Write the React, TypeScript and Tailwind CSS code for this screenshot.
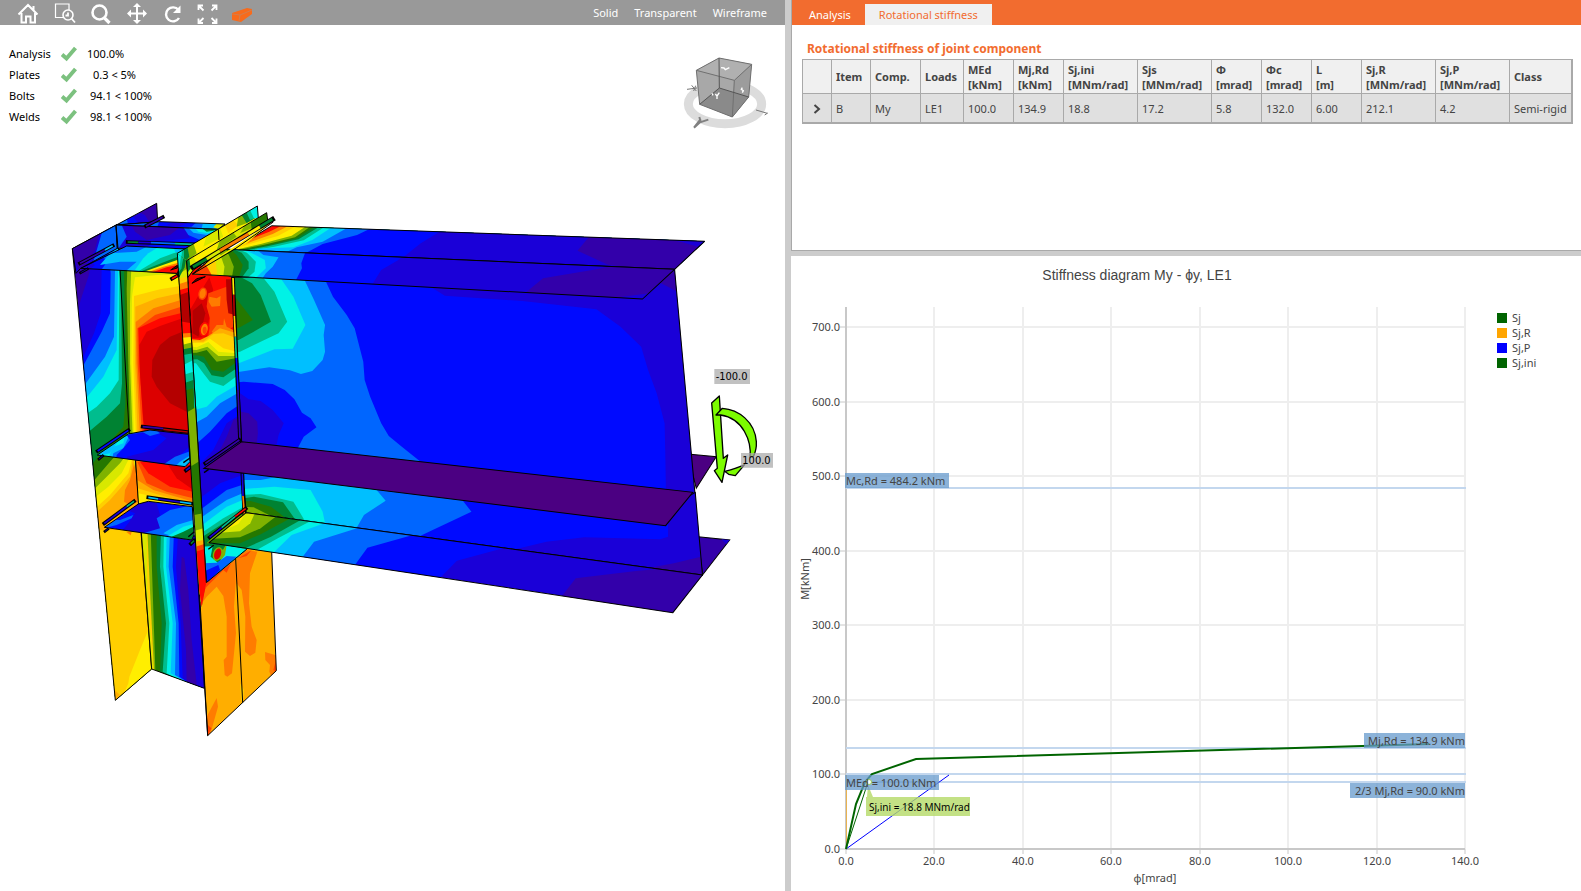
import React from "react";

type Band = [string, string];

interface FaceProps {
  id: string;
  outline: string;
  base: string;
  bands: Band[];
  stroke?: boolean;
}

// stress colours, low to high
const C = {
  purple: "#4b0082",
  indigo: "#3300aa",
  navy: "#1a00d8",
  blue: "#000aff",
  azure: "#0066ff",
  sky: "#00bfff",
  cyan: "#00f2e6",
  teal: "#00bd8e",
  green: "#008232",
  moss: "#257800",
  olive: "#7fb200",
  lime: "#d8e800",
  yellow: "#ffee00",
  gold: "#ffcf00",
  amber: "#ffae00",
  orange: "#ff7c00",
  coral: "#ff4200",
  red: "#ff0800",
  crimson: "#dc0000",
  maroon: "#b40000",
};

function Face({ id, outline, base, bands, stroke = true }: FaceProps) {
  return (
    <g>
      <clipPath id={id}>
        <polygon points={outline} />
      </clipPath>
      <g clipPath={`url(#${id})`}>
        <polygon points={outline} fill={base} />
        {bands.map(([color, points], i) => (
          <polygon key={i} points={points} fill={color} />
        ))}
      </g>
      {stroke && <polygon points={outline} fill="none" stroke="#000" strokeWidth={3} strokeLinejoin="round" />}
    </g>
  );
}

// weld drawn as a thin coloured bar, parts = [colour, x1, y1, x2, y2]
function Weld({ parts, width = 5 }: { parts: [string, number, number, number, number][]; width?: number }) {
  const first = parts[0];
  const last = parts[parts.length - 1];
  return (
    <g>
      <line x1={first[1]} y1={first[2]} x2={last[3]} y2={last[4]} stroke="#000" strokeWidth={width + 6} strokeLinecap="square" />
      {parts.map(([color, x1, y1, x2, y2], i) => (
        <line key={i} x1={x1} y1={y1} x2={x2} y2={y2} stroke={color} strokeWidth={width} />
      ))}
    </g>
  );
}

const leftFlange: Band[] = [
  [C.navy, "118,110 105,180 85,260 62,330 48,390 48,1600 300,1600 300,100"],
  [C.blue, "128,100 122,370 102,430 66,510 66,1600 300,1600 300,100"],
  [C.azure, "138,100 152,250 150,370 125,425 60,545 60,1600 300,1600 300,100"],
  [C.sky, "155,100 165,240 162,440 135,500 70,590 60,1600 300,1600 300,100"],
  [C.cyan, "170,100 174,250 170,480 130,560 74,630 60,1600 300,1600 300,100"],
  [C.teal, "178,240 176,570 150,610 110,650 75,675 60,1600 300,1600 300,100"],
  [C.green, "183,240 186,580 180,640 140,680 75,735 60,1600 300,1600 300,100"],
  [C.moss, "188,240 196,640 190,710 150,755 90,830 60,1600 300,1600 300,100"],
  [C.olive, "195,400 202,640 205,720 190,770 150,815 95,880 60,1600 300,1600 300,300"],
  [C.lime, "200,480 208,720 210,780 180,820 140,860 95,905 60,1600 300,1600"],
  [C.yellow, "212,740 215,790 185,850 145,890 95,930 60,1600 300,1600"],
  [C.gold, "218,800 205,850 150,915 95,965 60,1600 300,1600"],
  [C.amber, "220,800 210,860 185,890 150,930 95,980 110,1050 215,1036 240,1000"],
  [C.orange, "222,822 210,870 195,900 192,935 210,945 235,935 230,850"],
  [C.gold, "110,1020 245,1020 290,1500 166,1560"],
  [C.orange, "198,1025 215,1025 212,1036"],
  [C.yellow, "265,1320 240,1380 208,1460 205,1480 188,1520 290,1450"],
  [C.amber, "164,1500 180,1515 160,1540"],
];

const columnWebTop: Band[] = [
  [C.moss, "192,230 195,400 206,740 400,740 400,230"],
  [C.olive, "202,230 200,300 205,520 211,740 400,740 400,230"],
  [C.lime, "214,230 210,340 210,520 218,740 400,740 400,230"],
  [C.yellow, "225,262 290,255 380,252 400,740 222,740 214,520 216,320"],
  [C.gold, "222,318 300,298 380,285 400,740 228,740 220,520"],
  [C.amber, "226,350 290,325 380,305 400,740 233,740 225,520"],
  [C.orange, "227,396 280,355 380,325 400,740 240,740 229,520"],
  [C.coral, "232,415 285,375 380,345 400,740 246,740 233,520"],
  [C.red, "236,440 235,415 300,385 380,365 400,740 252,740 238,520"],
  [C.crimson, "238,465 260,425 300,408 380,380 400,740 260,740 250,690 240,550"],
  [C.maroon, "380,420 330,440 300,465 277,510 275,560 290,590 330,640 380,665"],
];

const columnWebMiddle: Band[] = [
  [C.coral, "232,815 260,880 320,905 400,925 400,800"],
  [C.red, "240,815 265,850 330,890 400,905 400,800"],
  [C.crimson, "318,815 370,820 400,830 400,900 350,865"],
  [C.amber, "232,870 280,900 400,935 400,960 230,960"],
  [C.gold, "233,895 300,915 400,945 400,960 230,960"],
  [C.yellow, "235,910 300,924 400,952 400,970 230,960"],
];

const columnWebBottom: Band[] = [
  [C.lime, "245,1000 260,1000 262,1200 280,1440 240,1440"],
  [C.olive, "262,1020 270,1200 282,1440 450,1520 450,1000 265,1000"],
  [C.moss, "272,1020 278,1200 286,1440 450,1520 450,1000 270,1000"],
  [C.green, "290,1020 290,1130 305,1300 300,1445 450,1520 450,1000"],
  [C.teal, "303,1020 300,1130 318,1300 308,1445 450,1520 450,1000"],
  [C.cyan, "312,1020 310,1130 328,1300 320,1450 450,1520 450,1000"],
  [C.sky, "320,1020 318,1130 338,1300 332,1450 450,1520 450,1000"],
  [C.azure, "330,1020 326,1130 348,1300 345,1455 450,1520 450,1000"],
  [C.blue, "342,1020 338,1130 356,1300 358,1460 450,1520 450,1000"],
  [C.navy, "355,1020 348,1130 362,1300 368,1465 450,1520 450,1000"],
  [C.indigo, "365,1100 373,1105 385,1200 395,1350 412,1500 380,1480 378,1380 360,1200"],
];

const flangeStrip: Band[] = [
  [C.lime, "340,262 395,228 395,2000 340,2000"],
  [C.green, "340,180 378,210 374,232 358,262 340,265"],
  [C.teal, "340,180 370,204 364,236 350,255"],
  [C.cyan, "340,180 363,199 358,234 350,245"],
  [C.gold, "340,272 395,255 395,2000 340,2000"],
  [C.orange, "340,288 395,270 395,2000 340,2000"],
  [C.red, "340,305 395,290 395,2000 340,2000"],
  [C.maroon, "340,322 395,302 395,400 340,390"],
  [C.orange, "340,432 400,428 450,2000 340,2000"],
  [C.yellow, "340,446 400,440 450,2000 340,2000"],
  [C.olive, "340,472 400,456 450,2000 340,2000"],
  [C.green, "340,484 400,472 450,2000 340,2000"],
  [C.teal, "340,500 400,490 450,2000 340,2000"],
  [C.cyan, "340,540 400,510 450,2000 340,2000"],
  [C.teal, "340,565 400,545 450,2000 340,2000"],
  [C.green, "340,590 400,570 450,2000 340,2000"],
  [C.moss, "340,610 400,595 450,2000 340,2000"],
  [C.olive, "340,690 410,650 450,2000 340,2000"],
  [C.moss, "340,862 420,812 450,2000 340,2000"],
  [C.olive, "340,985 430,970 450,2000 340,2000"],
  [C.lime, "340,1040 430,1015 450,2000 340,2000"],
  [C.amber, "340,1070 440,1048 450,2000 340,2000"],
  [C.coral, "340,1090 440,1060 450,2000 340,2000"],
  [C.red, "340,1105 440,1075 470,2000 340,2000"],
];

const rightFlange: Band[] = [
  [C.red, "400,1020 440,1060 444,1160 420,1210 400,1250"],
  [C.coral, "440,1165 418,1205 415,1240 440,1205 460,1175 500,1140 490,1120"],
  [C.orange, "415,1255 440,1220 470,1190 490,1218 500,1280 500,1400 491,1410 494,1455 502,1460 516,1450 528,1330 522,1250 527,1180 527,1105 500,1130 440,1190 416,1230"],
  [C.orange, "530,1100 560,1080 592,1085 570,1150 567,1240 575,1310 590,1350 586,1388 570,1398 555,1385 556,1280 545,1200 530,1180"],
  [C.coral, "535,1105 575,1080 560,1098"],
  [C.coral, "490,1140 513,1120 500,1148"],
  [C.orange, "440,1580 470,1524 474,1550 452,1628 440,1640"],
  [C.coral, "438,1600 454,1615 443,1640"],
  [C.orange, "615,1386 648,1396 652,1440 635,1460 628,1445 630,1425 616,1410"],
  [C.coral, "648,1410 640,1440 652,1450"],
  [C.gold, "540,1480 552,1500 549,1540 543,1530"],
];

const endPlate: Band[] = [
  [C.crimson, "425,300 448,262 460,300 440,345 448,380 440,440 405,445 380,440 390,360"],
  [C.maroon, "398,362 425,340 436,370 430,395 415,440 398,430"],
  [C.coral, "445,310 500,290 515,350 520,410 470,440 445,440 450,385 440,350"],
  [C.orange, "448,320 470,325 482,318 480,348 455,350 446,335"],
  [C.orange, "455,425 470,405 490,405 492,385 500,410 520,420 520,470 470,440"],
  [C.maroon, "498,268 522,268 526,375 505,370 500,330"],
  [C.amber, "360,445 420,450 445,438 480,415 530,430 530,760 360,760"],
  [C.gold, "360,452 430,455 460,432 490,430 530,445 530,760 360,760"],
  [C.yellow, "360,460 430,458 450,446 490,475 530,485 530,760 360,760"],
  [C.lime, "360,466 410,472 445,456 475,485 530,490 530,760 360,760"],
  [C.olive, "360,478 410,480 442,470 475,498 530,498 530,760 360,760"],
  [C.moss, "360,490 410,488 440,480 470,515 530,504 530,760 360,760"],
  [C.green, "360,498 410,496 432,500 455,540 490,545 530,515 530,760 360,760"],
  [C.teal, "360,510 412,508 432,520 455,556 490,562 530,535 530,760 360,760"],
  [C.cyan, "360,520 408,520 430,550 450,575 490,588 535,555 545,760 360,760"],
  [C.sky, "395,662 440,650 470,620 540,580 550,1100 400,1100"],
  [C.azure, "395,705 440,680 480,640 540,605 550,1100 400,1100"],
  [C.blue, "395,775 450,725 500,670 545,640 550,1100 400,1100"],
  [C.navy, "395,850 460,780 500,700 545,670 555,1100 400,1100"],
  [C.indigo, "460,820 500,740 520,690 545,680 555,760"],
  [C.blue, "420,925 480,880 560,850 560,1200 420,1200"],
  [C.azure, "420,960 500,900 560,880 560,1200 420,1200"],
  [C.sky, "420,985 500,930 560,905 560,1200 420,1200"],
  [C.cyan, "420,1010 500,950 560,925 560,1200 420,1200"],
  [C.teal, "420,1032 490,985 560,945 560,1200 420,1200"],
  [C.green, "420,1045 490,1000 560,955 560,1200 420,1200"],
  [C.olive, "440,1060 500,1000 560,965 560,1200"],
  [C.green, "425,1060 500,1060 490,1078 470,1085 465,1108 440,1120"],
  [C.cyan, "425,1070 458,1068 452,1100 475,1120 495,1095 500,1065 570,1080 430,1190"],
  [C.azure, "430,1120 470,1118 500,1098 530,1100 430,1190"],
  [C.blue, "430,1145 475,1125 480,1140 430,1190"],
];

const stiffenerUpper: Band[] = [
  [C.cyan, "100,820 195,735 190,760 160,770 140,815"],
  [C.azure, "215,720 190,775 160,790 150,840 110,850 400,840 400,700"],
  [C.sky, "140,770 180,745 150,790 100,800"],
  [C.blue, "200,735 210,750 190,775 170,795 165,830 400,870 400,700"],
  [C.navy, "215,735 290,728 320,745 280,780 200,800 205,825 320,830 400,760 400,745 330,720"],
  [C.azure, "240,722 290,722 300,730 270,738"],
  [C.azure, "300,830 345,800 400,780 400,860"],
  [C.sky, "345,830 360,815 400,790 400,860"],
];

const stiffenerLower: Band[] = [
  [C.navy, "150,1000 200,960 225,970 205,1000 180,1030 280,1040 310,1010 290,940 240,930 150,980"],
  [C.azure, "180,990 220,975 215,985 170,1005 130,1015 140,990"],
  [C.azure, "290,985 330,960 400,945 400,1060 250,1030 300,1015"],
  [C.sky, "310,1030 350,1005 400,990 400,1060"],
  [C.cyan, "320,1040 370,1010 400,1002 400,1060"],
  [C.green, "335,1040 370,1025 400,1010 400,1060"],
];

const beamTop: Band[] = [
  [C.orange, "135,70 85,95 20,122 -50,150 1500,150 1500,70"],
  [C.gold, "155,70 95,102 15,132 -50,150 1500,300 1500,70"],
  [C.yellow, "178,70 110,108 10,137 -50,155 1500,300 1500,70"],
  [C.olive, "205,70 150,107 60,132 -50,158 1500,300 1500,70"],
  [C.moss, "218,70 160,112 70,134 -50,160 1500,300 1500,70"],
  [C.green, "232,70 165,115 75,137 -50,162 1500,300 1500,70"],
  [C.teal, "247,70 170,118 80,139 -50,164 1500,300 1500,70"],
  [C.cyan, "262,70 185,121 100,140 -50,166 1500,300 1500,70"],
  [C.sky, "284,70 210,120 155,142 50,146 60,160 1500,300 1500,70"],
  [C.azure, "335,70 240,125 165,142 130,158 1500,300 1500,70"],
  [C.blue, "410,70 340,105 240,132 190,160 1500,300 1500,70"],
  [C.navy, "620,70 525,130 470,175 1500,300 1500,70"],
  [C.indigo, "1030,90 980,152 1070,195 1262,215 1400,120 1340,143 1280,125"],
];

const beamFront: Band[] = [
  [C.indigo, "1090,195 1040,207 880,235 815,290 1080,300 1110,290 1190,280 1300,200"],
  [C.blue, "480,160 460,180 410,210 380,260 -150,260 -150,130"],
  [C.azure, "192,150 178,190 180,205 160,245 -150,260 -150,130"],
  [C.sky, "50,150 68,165 112,172 95,200 75,220 62,240 -150,240 -150,130"],
  [C.cyan, "15,150 45,165 72,180 75,205 40,240 -150,240 -150,130"],
  [C.teal, "0,150 20,158 46,185 42,215 15,240 -150,240 -150,130"],
  [C.green, "-15,150 5,158 25,185 25,205 0,240 -150,240 -150,130"],
  [C.moss, "-30,145 -10,165 8,195 -5,240 -150,240 -150,130"],
  [C.olive, "-45,140 -30,170 -18,200 -25,240 -150,240 -150,130"],
  [C.lime, "-70,130 -55,170 -45,200 -50,240 -150,240 -150,130"],
  [C.gold, "-85,150 -70,190 -65,240 -150,240"],
  [C.coral, "-105,185 -90,210 -75,240 -150,240"],
];

const beamWeb: Band[] = [
  [C.navy, "540,240 560,265 595,287 820,303 1035,328 1105,380 1165,440 1185,510 1210,580 1233,670 1235,760 1237,880 1400,880 1400,200"],
  [C.indigo, "1215,245 1270,275 1262,200"],
  [C.azure, "245,235 270,290 310,345 333,385 358,485 362,540 378,590 410,670 432,708 470,740 530,790 -50,790 -50,220"],
  [C.sky, "185,235 215,300 247,375 243,405 247,455 240,480 210,513 177,522 145,511 85,502 0,515 -50,520 -50,220"],
  [C.cyan, "115,230 155,290 190,375 153,446 100,448 0,488 -50,495 -50,220"],
  [C.teal, "65,230 100,275 137,365 112,400 60,425 0,455 -50,470 -50,220"],
  [C.green, "0,230 35,250 60,285 90,365 40,395 0,418 -50,435 -50,220"],
  [C.moss, "-19,285 0,310 37,360 0,382 -50,400"],
  [C.blue, "-20,548 10,545 95,552 130,570 158,598 180,638 205,655 222,682 185,710 165,750 -20,740"],
  [C.navy, "-20,565 25,598 60,603 95,630 127,670 112,705 105,740 -20,740"],
  [C.indigo, "-20,630 25,640 50,665 52,700 48,735 -20,735"],
];

const beamWebLower: Band[] = [
  [C.navy, "1243,960 1243,1010 1220,1018 1000,1012 890,1025 770,1055 1400,1200 1400,860 1243,880"],
  [C.indigo, "1400,1055 1260,1090 1140,1113 1400,1150"],
  [C.azure, "630,880 672,935 515,1012 0,1000 0,780"],
  [C.sky, "380,850 423,902 360,945 335,990 0,1000 0,840 60,840 110,830"],
  [C.cyan, "0,868 100,860 205,870 240,935 248,975 0,960"],
  [C.teal, "0,885 60,882 155,905 190,965 0,960"],
  [C.green, "0,897 40,890 125,907 165,965 0,960"],
  [C.moss, "0,905 30,903 90,920 140,960 0,960"],
  [C.olive, "0,920 40,922 100,953 0,960"],
];

const beamBottom: Band[] = [
  [C.indigo, "1400,1090 1150,1113 975,1135 930,1195 1260,1250 1400,1200"],
  [C.blue, "780,1040 630,1082 575,1140 -150,1140 -150,900"],
  [C.azure, "520,1000 370,1043 330,1100 -150,1100 -150,900"],
  [C.sky, "350,975 340,985 215,1025 175,1080 -150,1080 -150,900"],
  [C.cyan, "250,960 245,970 150,1005 85,1070 -150,1070 -150,900"],
  [C.teal, "215,958 110,1015 40,1055 -150,1050 -150,900"],
  [C.green, "185,955 90,1010 15,1045 -150,1040 -150,900"],
  [C.moss, "155,950 60,1003 0,1030 -150,1030 -150,900"],
  [C.olive, "110,945 60,985 0,1012 -150,1020 -150,900"],
  [C.lime, "45,935 30,970 0,994 -60,998 0,920"],
  [C.yellow, "20,935 -5,972 -45,990 0,930"],
];

function ConnectionModel() {
  return (
    <svg viewBox="-180 -495 2355 2598" className="block h-full w-full" role="img" aria-label="Equivalent stress model of the connection">
      {/* column */}
      <Face id="lf" outline="37,176 168,105 182,240 275,1437 166,1531" base={C.indigo} bands={leftFlange} />
      <Face id="wt" outline="180,240 356,250 390,740 208,740" base={C.green} bands={columnWebTop} />
      <Face id="wm" outline="226,800 400,810 400,960 236,950" base={C.orange} bands={columnWebMiddle} />
      <Face id="wb" outline="243,1015 420,1040 433,1495 275,1437" base={C.gold} bands={columnWebBottom} />

      {/* top of the column */}
      <Face
        id="lft"
        outline="37,176 290,40 293,95 168,105 172,175 62,235 48,250"
        base={C.navy}
        bands={[
          [C.indigo, "220,60 290,30 300,100 270,100 255,75"],
          [C.azure, "128,120 160,105 205,80 225,105 172,180 100,215"],
          [C.blue, "200,85 215,75 240,105 205,108"],
          [C.indigo, "30,176 118,128 105,180 80,220 60,250"],
        ]}
      />
      <Face
        id="tb"
        outline="168,105 300,95 495,102 475,118"
        base={C.azure}
        bands={[
          [C.blue, "300,90 410,96 395,110 290,115"],
          [C.navy, "350,90 385,98 350,112 320,105"],
          [C.sky, "430,95 500,95 470,120 425,115"],
          [C.lime, "475,95 500,95 480,120 460,112"],
        ]}
      />
      <Face
        id="tw"
        outline="168,105 475,118 378,177 172,175"
        base={C.navy}
        bands={[
          [C.azure, "160,100 185,105 200,140 172,180"],
          [C.indigo, "215,106 360,112 330,135 260,150 225,125"],
          [C.blue, "345,100 375,112 390,145 280,155 250,180 480,180 480,110"],
          [C.azure, "370,112 385,135 420,150 480,150 480,110"],
          [C.sky, "385,113 400,128 440,135 480,118"],
          [C.cyan, "405,114 415,125 445,130 480,118"],
          [C.green, "425,115 440,125 460,122 480,116"],
        ]}
      />
      <Face
        id="ts"
        outline="62,235 200,168 378,177 352,250"
        base={C.azure}
        bands={[
          [C.blue, "60,235 120,200 145,210 120,245"],
          [C.navy, "60,235 90,215 105,225 85,242"],
          [C.sky, "120,225 150,190 230,185 260,170 400,170 400,260 190,250 230,215 180,215"],
          [C.cyan, "225,240 250,205 265,190 295,172 340,172 350,195 290,235 250,245"],
          [C.teal, "235,244 300,205 340,190 380,180 380,215 310,250"],
          [C.green, "240,245 290,225 380,190 380,255"],
          [C.yellow, "250,246 300,228 380,200 380,255"],
          [C.orange, "265,246 310,230 380,212 380,255"],
          [C.red, "278,247 320,232 380,220 380,255"],
        ]}
      />
      <line x1={168} y1={105} x2={174} y2={175} stroke="#000" strokeWidth={3} />
      <Weld parts={[[C.indigo, 258, 108, 308, 82]]} />
      <Weld parts={[[C.green, 203, 156, 235, 157], [C.navy, 235, 157, 273, 158], [C.azure, 273, 158, 345, 161], [C.teal, 345, 161, 400, 163]]} />
      <Weld parts={[[C.indigo, 60, 220, 135, 180], [C.sky, 135, 180, 158, 167]]} />
      <Weld width={2} parts={[[C.navy, 62, 248, 82, 237]]} />

      {/* column stiffeners */}
      <Face id="s1" outline="112,795 205,732 270,720 385,733 390,815 375,830" base={C.sky} bands={stiffenerUpper} />
      <Weld parts={[[C.blue, 113, 783, 205, 721]]} />
      <Weld parts={[[C.indigo, 248, 710, 310, 716], [C.maroon, 310, 718, 383, 726]]} />
      <Weld width={2} parts={[[C.navy, 117, 807, 128, 798]]} />
      <Weld parts={[[C.navy, 378, 841, 390, 832]]} />
      <path d="M370 818l20-14" stroke="#000" strokeWidth={4} />

      <Face id="s2" outline="133,1012 235,942 265,934 397,950 402,1035 395,1050" base={C.blue} bands={stiffenerLower} />
      <Weld parts={[[C.navy, 133, 1000, 200, 950], [C.teal, 200, 950, 222, 934]]} />
      <Weld parts={[[C.sky, 265, 922, 295, 927], [C.navy, 295, 927, 360, 936], [C.sky, 360, 936, 394, 941]]} />
      <Weld width={2} parts={[[C.navy, 135, 1024, 143, 1018]]} />
      <Weld parts={[[C.green, 393, 1061, 402, 1052]]} />
      <path d="M385 1040l18-15" stroke="#000" strokeWidth={4} />

      {/* right column flange */}
      <Face id="rf" outline="416,1040 635,1085 649,1442 443,1637 418,1200" base={C.amber} bands={rightFlange} />
      <line x1={527} y1={1105} x2={548} y2={1538} stroke="#000" strokeWidth={3} />

      {/* beam */}
      <g transform="translate(540 30) scale(1.0331 1)">
        <polygon points="1300,762 1383,770 1325,865" fill={C.purple} stroke="#000" strokeWidth={3} />
        <polygon points="1330,1010 1422,1020 1343,1125" fill={C.indigo} stroke="#000" strokeWidth={3} />
        <polygon points="1398,1018 1422,1020 1412,1032" fill={C.navy} />
        <Face id="bw" outline="-19,232 1262,208 1322,890 5,730" base={C.blue} bands={beamWeb} />
        <Face id="bwl" outline="5,800 1236,930 1322,877 1343,1125 18,938" base={C.blue} bands={beamWebLower} />
      </g>

      <Face id="ep" outline="380,212 520,262 542,755 555,960 562,1076 439,1178" base={C.red} bands={endPlate} />
      <ellipse cx={428} cy={311} rx={13} ry={19} fill={C.coral} transform="rotate(12 428 311)" />
      <ellipse cx={428} cy={311} rx={9} ry={15} fill={C.orange} transform="rotate(12 428 311)" />
      <ellipse cx={433} cy={418} rx={15} ry={22} fill={C.red} transform="rotate(12 433 418)" />
      <ellipse cx={433} cy={418} rx={10} ry={17} fill={C.orange} transform="rotate(12 433 418)" />
      <ellipse cx={434} cy={421} rx={6} ry={11} fill={C.coral} />
      <ellipse cx={473} cy={1092} rx={14} ry={21} fill={C.olive} transform="rotate(18 473 1092)" />
      <ellipse cx={473} cy={1092} rx={10} ry={17} fill={C.crimson} transform="rotate(18 473 1092)" />
      <Weld
        parts={[
          [C.yellow, 519, 264, 521, 314],
          [C.maroon, 521, 314, 523, 378],
          [C.gold, 523, 378, 526, 440],
          [C.teal, 526, 440, 529, 504],
          [C.blue, 529, 504, 534, 600],
          [C.indigo, 534, 600, 540, 750],
        ]}
      />
      <Weld parts={[[C.navy, 547, 850, 549, 918], [C.orange, 549, 918, 553, 972]]} />
      <Face id="fs" outline="352,190 380,212 439,1178 425,1250 418,1200" base={C.olive} bands={flangeStrip} stroke={false} />

      <g transform="translate(540 30) scale(1.0331 1)">
        <Face id="bt" outline="-137,222 93,77 1349,124 1262,208 0,150" base={C.red} bands={beamTop} />
        <Face id="bf" outline="-137,222 -50,146 0,150 1262,208 1169,297" base={C.navy} bands={beamFront} />
        <polygon points="-105,805 5,725 1315,877 1236,977" fill={C.purple} stroke="#000" strokeWidth={3} />
        <Face id="bb" outline="-90,1028 18,938 1343,1125 1257,1238" base={C.navy} bands={beamBottom} />
      </g>
      <Weld parts={[[C.indigo, 436, 820, 538, 750]]} />
      <path d="M432 848l14-10M445 1078l16-12" stroke="#000" strokeWidth={4} />
      <Weld parts={[[C.navy, 449, 1042, 485, 1013], [C.teal, 485, 1013, 525, 980], [C.red, 525, 980, 557, 956]]} />

      {/* top of the end plate */}
      <Face
        id="rt"
        outline="352,190 592,48 595,85 380,212"
        base={C.yellow}
        stroke={false}
        bands={[
          [C.olive, "376,170 400,160 410,190 380,215"],
          [C.green, "345,190 382,168 388,200 378,212"],
          [C.teal, "345,190 372,174 372,206"],
          [C.cyan, "345,190 367,176 364,200"],
          [C.lime, "440,135 480,115 490,140 430,170"],
          [C.gold, "495,105 520,90 535,105 505,130"],
          [C.olive, "535,80 555,68 560,100 530,110"],
          [C.green, "545,75 565,65 585,85 560,100"],
          [C.teal, "560,68 575,58 585,85 570,90"],
          [C.cyan, "570,60 600,40 600,85 582,85"],
        ]}
      />
      <path d="M380 212L439 1178M595 85L592 48L352 190L443 1637" stroke="#000" strokeWidth={3} fill="none" />
      <line x1={475} y1={118} x2={477} y2={150} stroke="#000" strokeWidth={3} />
      <Face
        id="et"
        outline="380,212 620,68 623,90 400,240 384,262"
        base={C.lime}
        bands={[
          [C.yellow, "400,200 470,158 480,175 410,220"],
          [C.green, "378,212 388,206 392,235 382,250"],
          [C.olive, "480,150 520,128 530,140 470,180"],
          [C.olive, "555,105 575,95 575,115 540,130"],
          [C.moss, "572,95 630,60 630,90 575,120"],
        ]}
      />
      <polygon points="398,252 640,92 560,160 520,178 455,215" fill={C.yellow} />
      <path d="M398 252L520 180L640 96" fill="none" stroke="#000" strokeWidth={3} />
      <Weld
        width={9}
        parts={[
          [C.green, 399, 231, 440, 207],
          [C.lime, 440, 207, 480, 182],
          [C.orange, 480, 182, 565, 132],
          [C.yellow, 565, 132, 600, 110],
          [C.green, 600, 110, 637, 88],
        ]}
      />
      <Weld parts={[[C.red, 336, 266, 352, 257]]} />
      <path d="M332 240l20-14v8zM396 280l14-14 26-6z" fill="#5a0000" stroke="#000" strokeWidth={3} />

      {/* applied moment */}
      <g transform="translate(1800 510)">
        <g fill="#7cfc00" stroke="#000" strokeWidth={4} strokeLinejoin="round">
          <path d="M155 129L178 108L190 295L203 285L186 367L163 332L172 325Z" />
          <path d="M168 165L187 145C235 148 285 185 289 245C290 262 286 278 280 290L270 292C275 245 250 175 182 165Z" />
          <path d="M194 334C220 328 242 320 254 314L226 347L206 343Z" />
        </g>
        <path d="M163 27h107v45H163zM243 279h96v44h-96z" fill="#a9a9a9" fillOpacity={0.72} />
        <g fill="#000" fontSize={33} fontFamily="'DejaVu Sans Condensed', 'DejaVu Sans', sans-serif">
          <text x={167} y={60}>-100.0</text>
          <text x={247} y={312}>100.0</text>
        </g>
      </g>

      {/* view cube */}
      <g transform="translate(1500 -570)">
        <ellipse cx={495} cy={312} rx={110} ry={59} fill="none" stroke="#dcdcdc" strokeWidth={27} />
        <path d="M409 211L477 174L575 193L566 291L517 351L419 313Z" fill="#a8a8a8" />
        <path d="M409 211L477 174L575 193L523 241Z" fill="#b0b0b0" />
        <path d="M523 241L575 193L566 291L517 351Z" fill="#9c9c9c" />
        <path d="M419 313L478 264L566 291L517 351Z" fill="#8a8a8a" />
        <g fill="none" stroke="#707070" strokeWidth={3}>
          <path d="M409 211L477 174L575 193L566 291L517 351L419 313ZM409 211L523 241L575 193M523 241L517 351" />
          <path d="M477 174L478 264L419 313M478 264L566 291" stroke="#555" />
        </g>
        <path d="M483 203l9 1 4 5 12-6M456 280l3 6M466 282l5 6v9M478 278l-7 10M547 263l-3 5 6 4-3 6" fill="none" stroke="#fff" strokeWidth={4} />
        <path d="M381 268l30-4M395 256l14 17M407 257l-6 16M588 330l34 10M614 345l9-6" fill="none" stroke="#777" strokeWidth={3} />
        <path d="M402 383l18-16 25-8M418 351l5 17M402 383l20-26" fill="none" stroke="#808080" strokeWidth={6} />
      </g>
    </svg>
  );
}

function ToolIcon({ label, children }: { label: string; children: React.ReactNode }) {
  return (
    <button type="button" aria-label={label} className="flex h-6 w-6 items-center justify-center">
      <svg viewBox="0 0 24 24" className="h-6 w-6" fill="none" stroke="#fff" strokeWidth={2}>
        {children}
      </svg>
    </button>
  );
}

function Toolbar() {
  return (
    <div className="flex h-[25px] shrink-0 items-center justify-between bg-[#999999] text-white">
      <div className="flex items-center gap-3 pt-0.5 pl-4">
        <ToolIcon label="Home">
          <path d="M2.5 12.5L12 3L21.5 12.5M5.500 11V20.500H10V14.500H14.500V20.500H19V11M17.500 4V8" />
        </ToolIcon>
        <ToolIcon label="Zoom window">
          <path d="M12 15.500H3.500V2H17V8" strokeWidth={1.2} />
          <circle cx="16" cy="13" r="5" strokeWidth={1.6} />
          <path d="M19.500 16.500L23 20.500M16 10.500V13.500H13.500" strokeWidth={1.8} />
        </ToolIcon>
        <ToolIcon label="Zoom">
          <circle cx="11.5" cy="10.5" r="7" strokeWidth={2.6} />
          <path d="M16.500 16L21.500 21" strokeWidth={3.2} />
        </ToolIcon>
        <ToolIcon label="Pan">
          <path d="M13 3V20M4.500 11.500H21.500" />
          <path d="M13 1L17 5H9ZM13 22L17 18H9ZM3 11.500L7 7.500V15.500ZM23 11.500L19 7.500V15.500Z" fill="#fff" stroke="none" />
        </ToolIcon>
        <ToolIcon label="Rotate">
          <path d="M18.500 8A7 7 0 1 0 19 16" strokeWidth={2.4} />
          <path d="M20.500 3.500V11H13Z" fill="#fff" stroke="none" />
        </ToolIcon>
        <ToolIcon label="Fit view">
          <path d="M2.500 8V3.500H7M3 4L7.500 8.500M16 3.500H20.500V8M20 4L15.500 8.500M2.500 16.500V21H7M3 20.500L7.500 16M16 21H20.500V16.500M20 20.500L15.500 16" strokeWidth={1.8} />
        </ToolIcon>
        <ToolIcon label="Solid section">
          <path d="M0 11L15 6L20 7V12L9 20L0 18Z" fill="#f76b1c" stroke="none" />
          <path d="M0 12L8 13L20 8M8 13L7 19" stroke="#c9835a" strokeWidth={0.8} />
        </ToolIcon>
      </div>
      <div className="flex gap-4 pt-0.5 pr-[18px] text-[11px]">
        <button type="button">Solid</button>
        <button type="button">Transparent</button>
        <button type="button">Wireframe</button>
      </div>
    </div>
  );
}

const results = [
  { name: "Analysis", value: "100.0%", cls: "pl-0" },
  { name: "Plates", value: "0.3  <  5%", cls: "pl-1.5" },
  { name: "Bolts", value: "94.1 < 100%", cls: "pl-[3px]" },
  { name: "Welds", value: "98.1 < 100%", cls: "pl-[3px]" },
];

function ResultSummary() {
  return (
    <ul className="absolute top-[18px] left-[9px] text-[11px] leading-[21px] text-black">
      {results.map((r) => (
        <li key={r.name} className="flex items-center">
          <span className="w-[52px]">{r.name}</span>
          <svg viewBox="0 0 16 16" className="mr-2.5 h-4 w-4" fill="none" stroke="#7cc17f" strokeWidth={4}>
            <path d="M1 8.500L5.500 12.500L14.500 2" />
          </svg>
          <span className={r.cls}>{r.value}</span>
        </li>
      ))}
    </ul>
  );
}

const columns = [
  { width: 29, head: "", unit: "", value: "" },
  { width: 39, head: "Item", unit: "", value: "B" },
  { width: 50, head: "Comp.", unit: "", value: "My" },
  { width: 43, head: "Loads", unit: "", value: "LE1" },
  { width: 50, head: "MEd", unit: "[kNm]", value: "100.0" },
  { width: 50, head: "Mj,Rd", unit: "[kNm]", value: "134.9" },
  { width: 74, head: "Sj,ini", unit: "[MNm/rad]", value: "18.8" },
  { width: 74, head: "Sjs", unit: "[MNm/rad]", value: "17.2" },
  { width: 50, head: "Φ", unit: "[mrad]", value: "5.8" },
  { width: 50, head: "Φc", unit: "[mrad]", value: "132.0" },
  { width: 50, head: "L", unit: "[m]", value: "6.00" },
  { width: 74, head: "Sj,R", unit: "[MNm/rad]", value: "212.1" },
  { width: 74, head: "Sj,P", unit: "[MNm/rad]", value: "4.2" },
  { width: 62, head: "Class", unit: "", value: "Semi-rigid" },
];

function StiffnessTable() {
  return (
    <table className="w-full table-fixed border-collapse border border-r-2 border-b-2 border-[#a9a9a9] text-left text-[11px] text-[#444444]">
      <colgroup>
        {columns.map((col, i) => (
          <col key={i} style={{ width: col.width }} />
        ))}
      </colgroup>
      <thead>
        <tr className="h-[34px] bg-[#f0f0f0]">
          {columns.map((col, i) => (
            <th key={i} className="border border-[#a9a9a9] px-1 leading-[15px] font-bold whitespace-nowrap">
              {col.head}
              {col.unit && <br />}
              {col.unit}
            </th>
          ))}
        </tr>
      </thead>
      <tbody>
        <tr className="h-[29px] bg-[#e0e0e0]">
          {columns.map((col, i) => (
            <td key={i} className="border border-[#a9a9a9] px-1 pt-0.5 whitespace-nowrap">
              {i === 0 ? (
                <button type="button" aria-label="Expand row" className="flex w-full justify-center">
                  <svg viewBox="0 0 8 12" className="h-3 w-2" fill="none" stroke="#444" strokeWidth={2}>
                    <path d="M1.500 2L6 6L1.500 10" />
                  </svg>
                </button>
              ) : (
                col.value
              )}
            </td>
          ))}
        </tr>
      </tbody>
    </table>
  );
}

const xTicks = [0, 20, 40, 60, 80, 100, 120, 140];
const yTicks = [0, 100, 200, 300, 400, 500, 600, 700];
const px = (v: number) => Math.round(846 + v * 4.424);
const py = (v: number) => Math.round(848.6 - v * 0.7446);

const legend = [
  { name: "Sj", color: "#006400" },
  { name: "Sj,R", color: "#ffa500" },
  { name: "Sj,P", color: "#0000ff" },
  { name: "Sj,ini", color: "#006400" },
];

function StiffnessChart() {
  return (
    <svg viewBox="791 256 790 635" className="block h-full w-full" fontSize={11} fill="#444">
      <text x={1137} y={280} fontSize={14} textAnchor="middle" fontFamily="'Liberation Sans', Arial, sans-serif">
        Stiffness diagram My - ϕy, LE1
      </text>

      {xTicks.map((t) => (
        <g key={t}>
          <line x1={px(t)} y1={307} x2={px(t)} y2={849} stroke="#eeeeee" strokeWidth={2} />
          <line x1={px(t)} y1={849} x2={px(t)} y2={854} stroke="#c8c8c8" />
          <text x={px(t)} y={865} textAnchor="middle">{t.toFixed(1)}</text>
        </g>
      ))}
      {yTicks.map((t) => (
        <g key={t}>
          <line x1={846} y1={py(t)} x2={1465} y2={py(t)} stroke="#eeeeee" strokeWidth={2} />
          <line x1={840} y1={py(t)} x2={845} y2={py(t)} stroke="#c8c8c8" />
          <text x={840} y={py(t) + 4} textAnchor="end">{t.toFixed(1)}</text>
        </g>
      ))}
      <path d="M846 307V849H1465" fill="none" stroke="#c8c8c8" strokeWidth={2} />

      <path d="M846 488H1466M846 748H1466M846 774H1466M846 782H1466" stroke="#c3d7ee" strokeWidth={2} />

      <path d="M846.500 849V775" stroke="#ffa500" strokeOpacity={0.6} />
      <path d="M846 849L949 775" stroke="#0000ff" fill="none" />
      <path d="M846 849L868 782" stroke="#006400" fill="none" />
      <path d="M846 849L856 804L865 782L872 774L916 759L1429 744" stroke="#006400" strokeWidth={2} fill="none" />

      <path d="M866 797H867L868 785L873 797H970V816H866Z" fill="#b4d966" fillOpacity={0.8} />
      <path d="M845 473H949V488H845ZM845 775H939V790H845ZM1364 733H1465V748H1364ZM1350 783H1465V798H1350Z" fill="#6699cc" fillOpacity={0.75} />
      <circle cx={869} cy={782} r={2.5} fill="#fff" stroke="#9ccc50" />
      <text x={846} y={485}>Mc,Rd = 484.2 kNm</text>
      <text x={846} y={787}>MEd = 100.0 kNm</text>
      <text x={1465} y={745} textAnchor="end">Mj,Rd = 134.9 kNm</text>
      <text x={1465} y={795} textAnchor="end">2/3 Mj,Rd = 90.0 kNm</text>
      <text x={869} y={811} fontSize={10} fill="#000">Sj,ini = 18.8 MNm/rad</text>

      <text x={1155} y={882} textAnchor="middle">ϕ[mrad]</text>
      <text transform="translate(809 579) rotate(-90)" textAnchor="middle">M[kNm]</text>

      {legend.map((item, i) => (
        <g key={item.name}>
          <rect x={1497} y={313 + i * 15} width={10} height={10} fill={item.color} />
          <text x={1512} y={322 + i * 15}>{item.name}</text>
        </g>
      ))}
    </svg>
  );
}

export default function App() {
  return (
    <div className="grid h-screen grid-cols-[785fr_6px_790fr] bg-white font-['Noto_Sans','Open_Sans',sans-serif]">
      <section className="flex min-h-0 min-w-0 flex-col">
        <Toolbar />
        <div className="relative min-h-0 flex-1">
          <ConnectionModel />
          <ResultSummary />
        </div>
      </section>

      <div className="bg-[#cccccc]" />

      <section className="flex min-h-0 min-w-0 flex-col">
        <div className="flex h-[251px] shrink-0 flex-col border-b border-l border-[#a9a9a9]">
          <nav className="flex h-[25px] shrink-0 items-end bg-[#f26c2f] text-[11px]">
            <button type="button" className="h-[21px] pt-0.5 pr-3.5 pl-[17px] text-white">Analysis</button>
            <button type="button" className="h-[21px] bg-[#f0f0f0] px-3.5 pt-0.5 text-[#f26c2f]">Rotational stiffness</button>
          </nav>
          <div className="pt-3.5 pr-[9px] pl-2.5">
            <h2 className="pl-[5px] text-xs leading-[20px] font-bold text-[#f26c2f]">Rotational stiffness of joint component</h2>
            <StiffnessTable />
          </div>
        </div>
        <div className="h-[5px] shrink-0 bg-[#cccccc]" />
        <div className="min-h-0 flex-1">
          <StiffnessChart />
        </div>
      </section>
    </div>
  );
}
